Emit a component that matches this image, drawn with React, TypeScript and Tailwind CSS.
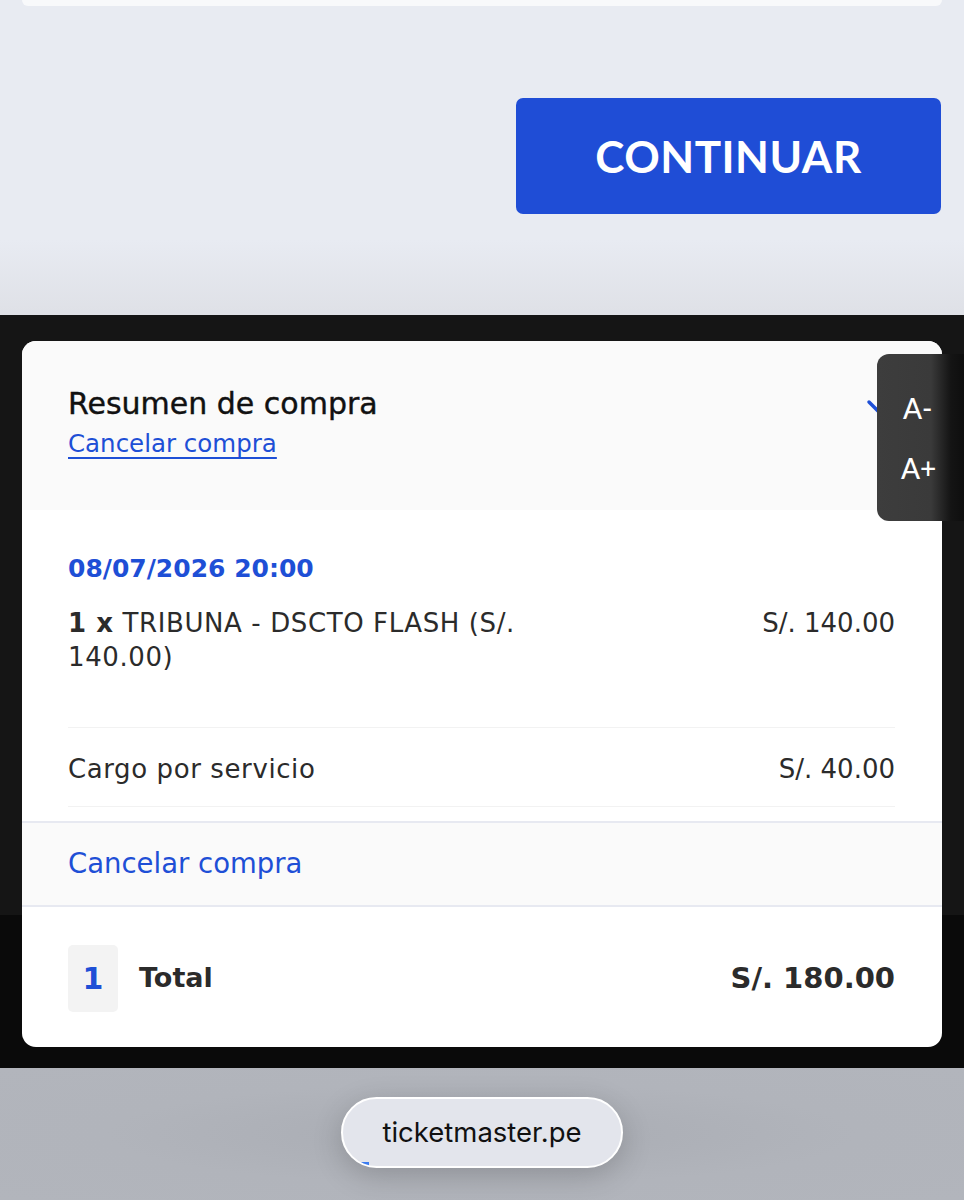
import React from "react";

const dv = { fontFamily: "'DejaVu Sans', 'Noto Sans', sans-serif" };

export default function App() {
  return (
    <div className="relative w-[964px] h-[1200px] overflow-hidden" style={dv}>
      {/* Top area */}
      <div className="h-[315px] bg-[linear-gradient(to_bottom,#e8ebf2_0px,#e8ebf2_240px,#dfe1e7_312px)] flex flex-col">
        <div className="mx-[22px] h-[6px] bg-[#f8f9fb] rounded-b-[6px]" />
        <div className="flex justify-end pr-[23px] mt-[92px]">
          <button
            className="w-[425px] h-[116px] rounded-[7px] bg-[#1f4dd6] text-white text-[44px] font-bold tracking-[0.5px] flex items-center justify-center"
            style={{ fontFamily: "Lato, sans-serif" }}
          >
            CONTINUAR
          </button>
        </div>
      </div>

      {/* Dark area */}
      <div className="h-[753px] bg-[linear-gradient(to_bottom,#151515_0px,#151515_600px,#0a0a0a_600px)] pt-[26px] px-[22px]">
        <div className="h-[706px] rounded-[14px] bg-white overflow-hidden flex flex-col">
          {/* Header */}
          <div className="h-[169px] bg-[#fafafa] pl-[46px] pr-[47px] pt-[45px] flex justify-between">
            <div className="flex flex-col">
              <div className="text-[30px] leading-[36px] text-[#111] [-webkit-text-stroke:0.4px_#111]">Resumen de compra</div>
              <div className="text-[24.5px] leading-[44px] text-[#1e4fd6] underline underline-offset-[5px]">Cancelar compra</div>
            </div>
            <svg width="22" height="14" viewBox="0 0 22 14" className="mt-[13px] mr-[7px]">
              <path d="M3 3 L11 11 L19 3" fill="none" stroke="#1e4fd6" strokeWidth="3.5" strokeLinecap="round" />
            </svg>
          </div>

          {/* Body */}
          <div className="pl-[46px] pr-[47px]">
            <div className="pt-[42px] pb-[53px] border-b border-[#f2f2f2]">
              <div className="text-[25px] leading-[34px] font-bold text-[#1e4fd6]">08/07/2026 20:00</div>
              <div className="mt-[20px] flex justify-between text-[26px] leading-[34px] text-[#2b2b2b]">
                <div className="w-[500px] tracking-[0.6px]">
                  <span className="font-bold">1 x</span> TRIBUNA - DSCTO FLASH (S/. 140.00)
                </div>
                <div>S/. 140.00</div>
              </div>
            </div>
            <div className="pt-[24px] pb-[20px] border-b border-[#f2f2f2] flex justify-between text-[26px] leading-[34px] text-[#2b2b2b]">
              <div className="tracking-[0.6px]">Cargo por servicio</div>
              <div>S/. 40.00</div>
            </div>
          </div>

          <div className="mt-[14px] h-[86px] border-y-2 border-[#e7e9f1] bg-[#fafafa] pl-[46px] flex items-center">
            <div className="text-[27.5px] text-[#1e4fd6]">Cancelar compra</div>
          </div>

          <div className="flex-1 pl-[46px] pr-[47px] flex items-center justify-between pt-[3px]">
            <div className="flex items-center">
              <div className="w-[50px] h-[67px] rounded-[5px] bg-[#f3f3f3] flex items-center justify-center text-[30px] font-bold text-[#1e4fd6]">1</div>
              <div className="ml-[21px] text-[27px] font-bold text-[#2b2b2b]">Total</div>
            </div>
            <div className="text-[29px] font-bold text-[#2b2b2b]">S/. 180.00</div>
          </div>
        </div>
      </div>

      {/* Bottom bar */}
      <div className="h-[132px] bg-[radial-gradient(ellipse_at_center,#a9acb3_0%,#b1b4bb_55%,#b2b5bc_100%)] flex justify-center pt-[29px]">
        <div className="relative w-[282px] h-[71px] rounded-full bg-[#e3e5ec] border-2 border-white shadow-[0_8px_30px_rgba(0,0,0,0.18)] flex items-center justify-center overflow-hidden">
          <span className="text-[27.5px] text-[#111]" style={{ fontFamily: "Inter, sans-serif" }}>ticketmaster.pe</span>
          <div className="absolute left-[10px] bottom-0 w-[16px] h-[4px] bg-[#3b7cf0]" />
        </div>
      </div>

      {/* A-/A+ overlay */}
      <div
        className="absolute left-[877px] top-[354px] w-[87px] h-[167px] rounded-l-[12px] bg-[linear-gradient(to_right,#3d3d3d_0%,#3a3a3a_62%,#141414_85%,#0e0e0e_100%)] flex flex-col items-start pl-[24px] pt-[34px] text-white text-[28px] font-medium leading-[40px] gap-[20px]"
        style={{ fontFamily: "Lato, sans-serif" }}
      >
        <div className="pl-[2px]">A-</div>
        <div>A+</div>
      </div>
    </div>
  );
}
